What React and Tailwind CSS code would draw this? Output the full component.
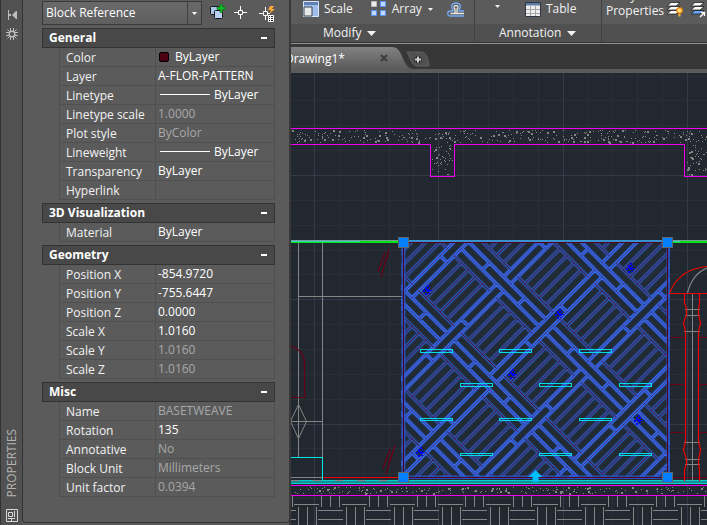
import React, { useState } from "react";

const sections = [
  {
    title: "General",
    rows: [
      { label: "Color", value: "ByLayer", swatch: true },
      { label: "Layer", value: "A-FLOR-PATTERN" },
      { label: "Linetype", value: "ByLayer", line: true },
      { label: "Linetype scale", value: "1.0000", muted: true },
      { label: "Plot style", value: "ByColor", muted: true },
      { label: "Lineweight", value: "ByLayer", line: true },
      { label: "Transparency", value: "ByLayer" },
      { label: "Hyperlink", value: "" },
    ],
  },
  { title: "3D Visualization", rows: [{ label: "Material", value: "ByLayer" }] },
  {
    title: "Geometry",
    rows: [
      { label: "Position X", value: "-854.9720" },
      { label: "Position Y", value: "-755.6447" },
      { label: "Position Z", value: "0.0000" },
      { label: "Scale X", value: "1.0160" },
      { label: "Scale Y", value: "1.0160", muted: true },
      { label: "Scale Z", value: "1.0160", muted: true },
    ],
  },
  {
    title: "Misc",
    rows: [
      { label: "Name", value: "BASETWEAVE", muted: true },
      { label: "Rotation", value: "135" },
      { label: "Annotative", value: "No", muted: true },
      { label: "Block Unit", value: "Millimeters", muted: true },
      { label: "Unit factor", value: "0.0394", muted: true },
    ],
  },
];

function Section({ title, rows }) {
  const [open, setOpen] = useState(true);
  return (
    <section className="mb-[3px]">
      <button
        type="button"
        aria-expanded={open}
        onClick={() => setOpen(!open)}
        className="flex h-5 w-full items-center justify-between border border-[#333333] bg-[#484848] pr-[7px] pl-1.5 text-left font-bold text-white"
      >
        {title}
        <span className="h-0.5 w-1.5 bg-white" />
      </button>
      {open && (
        <div className="pl-[17px]">
          <table className="w-full table-fixed border-separate border-spacing-0">
            <tbody>
              {rows.map((row) => (
                <tr key={row.label}>
                  <th scope="row" className="h-[19px] w-[97px] border-x border-b border-[#505050] p-0 pt-0.5 pl-1.5 text-left font-normal whitespace-nowrap text-[#f2f2f2]">
                    {row.label}
                  </th>
                  <td className={`h-[19px] border-r border-b border-[#505050] p-0 pl-0.5 whitespace-nowrap ${row.muted ? "text-[#a8a8a8]" : "text-white"}`}>
                    <div className="flex h-[18px] items-center pb-px">
                      {row.swatch && <span className="mr-1.5 ml-px size-2.5 rounded-xs border border-black bg-[#4c0013]" />}
                      {row.line && <span className="mr-1 ml-0.5 h-px w-[50px] bg-white" />}
                      {row.value}
                    </div>
                  </td>
                </tr>
              ))}
            </tbody>
          </table>
        </div>
      )}
    </section>
  );
}

function SideBar() {
  return (
    <div className="flex w-[22px] shrink-0 flex-col items-center border-l border-[#333333] bg-[#515151] pt-2.5 pb-[3px]">
      <button type="button" aria-label="Auto-hide">
        <svg width="12" height="10" viewBox="0 0 12 10" fill="#bdbdbd">
          <path d="M2 0h1v10H2zM10 1h1v8h-1zM3 4h2v2H3zM6 5l4-4v8z" />
        </svg>
      </button>
      <button type="button" aria-label="Palette settings" className="mt-2">
        <svg width="12" height="12" viewBox="0 0 12 12" fill="none" stroke="#bdbdbd">
          <circle cx="6" cy="6" r="2.800" strokeWidth="1.400" />
          <path d="M4.500 0v3M7.500 0v3M4.500 9v3M7.500 9v3M0 4.500h3M0 7.500h3M9 4.500h3M9 7.500h3M1.500 1.500l2.500 2.500M10.500 1.500L8 4M1.500 10.500L4 8M10.500 10.500L8 8" />
        </svg>
      </button>
      <span className="mt-auto rotate-180 text-xs leading-3 text-[#b5b5b5] [writing-mode:vertical-rl]">PROPERTIES</span>
      <svg className="mt-3 shrink-0" width="12" height="13" viewBox="0 0 12 13" fill="none" stroke="#d8d8d8">
        <path d="M.5.5h11v12H.5zM2.500 3.500h4v4h-4zM8.500 2v6M2 9.500h7M5.500 9v3" />
      </svg>
    </div>
  );
}

function PropertiesPalette() {
  return (
    <aside className="flex w-[289px] shrink-0 bg-[#5b5b5b] text-xs leading-4">
      <SideBar />
      <div className="mb-0.5 flex flex-1 flex-col rounded-b border-x border-b border-[#333333] pr-3.5 pl-[19px]">
        <div className="flex h-7 items-start pt-px">
          <div className="relative h-6 w-40">
            <select
              aria-label="Selected object"
              className="h-6 w-full appearance-none border border-[#3a3a3a] bg-linear-to-b from-[#696969] to-[#5f5f5f] pl-[3px] text-white"
            >
              <option>Block Reference</option>
            </select>
            <span className="pointer-events-none absolute inset-y-px right-px flex w-3.5 items-center justify-center border-l border-[#404040]">
              <svg width="5" height="3" viewBox="0 0 5 3" fill="#fff"><path d="M0 0h5L2.500 3z" /></svg>
            </span>
          </div>
          <button type="button" aria-label="Toggle PICKADD" className="ml-2 pt-0.5">
            <svg width="16" height="17" viewBox="0 0 16 17">
              <rect x=".5" y="3.500" width="9" height="8" rx="1" fill="#a9c5ea" stroke="#17191c" />
              <rect x="4.500" y="7.500" width="8" height="8" rx="1" fill="#b8d2f3" stroke="#17191c" />
              <path d="M10 1h2.500v3h3v2.500h-3v3H10v-3H7V4h3z" fill="#10bc25" stroke="#075b10" strokeWidth=".5" />
            </svg>
          </button>
          <button type="button" aria-label="Select objects" className="ml-2 pt-[5px]">
            <svg width="13" height="13" viewBox="0 0 13 13" fill="none" stroke="#fff">
              <path d="M6.500 0v4M6.500 9v4M0 6.500h4M9 6.500h4M4.500 4.500h4v4h-4z" />
            </svg>
          </button>
          <button type="button" aria-label="Quick select" className="ml-3 pt-1">
            <svg width="16" height="18" viewBox="0 0 16 18" fill="none" stroke="#fff">
              <path d="M6.500 2v4M6.500 11v4M0 8.500h4M9 8.500h2M4.500 6.500h4v4h-4z" />
              <path d="M11 1h4l-2 3h3l-6 5 2-4h-3z" fill="#ffaa38" stroke="none" />
              <path d="M9.500 10.500h5v6h-5z" fill="#fff" />
              <path d="M10 11.500h1M12 11.500h2M10 13.500h1M12 13.500h2M10 15.500h1M12 15.500h2" stroke="#222" />
            </svg>
          </button>
        </div>
        {sections.map((s) => (
          <Section key={s.title} {...s} />
        ))}
      </div>
      <div className="w-px bg-[#5b5b5b]" />
    </aside>
  );
}

function Caret() {
  return (
    <svg width="9" height="5" viewBox="0 0 9 5" fill="#f2f2f2"><path d="M0 0h9L4.500 5z" /></svg>
  );
}

function SmallCaret() {
  return (
    <svg width="5" height="3" viewBox="0 0 5 3" fill="#f2f2f2"><path d="M0 0h5L2.500 3z" /></svg>
  );
}

function LayersIcon({ children, bottom = "#fff" }) {
  return (
    <svg className="shrink-0" width="16" height="17" viewBox="0 0 16 17" stroke="#222" strokeWidth=".8">
      <path d="M4 9.500h9l-4 3.500H0z" fill={bottom} />
      <path d="M4 5.500h9L9 9H0z" fill="#fff" />
      <path d="M4 1.500h9L9 5H0z" fill="#fff" />
      {children}
    </svg>
  );
}

function Ribbon() {
  return (
    <div className="flex h-[42px] shrink-0 text-xs leading-4 text-[#f2f2f2]">
      <div className="flex w-[184px] shrink-0 flex-col border-r border-[#414141]">
        <div className="flex h-6 items-start pl-3">
          <button type="button" className="flex items-center gap-[5px]">
            <svg width="16" height="17" viewBox="0 0 16 17">
              <path d="M.5 1.500h15v15H.5z" fill="#9fbdea" stroke="#d6e4fa" />
              <path d="M1 2h14v3H1z" fill="#5f80b0" />
              <path d="M1 7h8v9H1z" fill="#e8e8e8" stroke="#3d4653" />
            </svg>
            <span className="pt-px">Scale</span>
          </button>
          <button type="button" className="ml-[18px] flex items-center gap-[5px]">
            <svg width="16" height="17" viewBox="0 0 16 17">
              <path d="M.5 1.500h5v5h-5z" fill="#eee" stroke="#bbb" />
              <path d="M9.500 1.500h5v5h-5zM.5 10.500h5v5h-5zM9.500 10.500h5v5h-5z" fill="#bfd7ff" stroke="#5c94f2" />
            </svg>
            <span className="pt-px">Array</span>
          </button>
          <button type="button" aria-label="Array options" className="ml-1.5 pt-2"><SmallCaret /></button>
          <button type="button" aria-label="Offset" className="ml-3.5 pt-0.5">
            <svg width="17" height="15" viewBox="0 0 17 15" fill="none" strokeWidth="1.300">
              <path d="M17 14H3c-3 0-3-5 0-5h3V8C3 5 5 1 9 1s6 4 3 7v1h5" stroke="#73a8f5" />
              <path d="M17 11.500H3.500M8 11V7C6 6 7 3.500 9 3.500S12 6 10 7v4" stroke="#e8e8e8" />
            </svg>
          </button>
        </div>
        <button type="button" className="flex h-[18px] items-center gap-1.5 bg-[#505050] pl-8">
          Modify <Caret />
        </button>
      </div>
      <div className="flex w-[127px] shrink-0 flex-col border-r border-[#414141]">
        <div className="flex h-6 items-start pl-5">
          <button type="button" aria-label="Text options" className="w-[30px] pt-[5px]"><SmallCaret /></button>
          <button type="button" className="flex items-center gap-[5px]">
            <svg width="16" height="16" viewBox="0 0 16 16">
              <path d="M.5 1.500h15v14H.5z" fill="#ededed" stroke="#2f3742" />
              <path d="M1 2h14v2.500H1z" fill="#5c7ca6" />
              <path d="M1 8.500h14M1 12.500h14M5.500 5v10M10.500 5v10" stroke="#a5a5a5" />
            </svg>
            <span className="pt-px">Table</span>
          </button>
        </div>
        <button type="button" className="flex h-[18px] items-center gap-1.5 bg-[#505050] pl-6">
          Annotation <Caret />
        </button>
      </div>
      <div className="flex min-w-0 flex-1 flex-col overflow-hidden">
        <div className="flex h-6 items-start gap-2 pl-1">
          <button type="button" className="-mt-3 w-[53px] shrink-0 text-center leading-[15px]">
            Layer Properties
          </button>
          <button type="button" aria-label="Layer off" className="pt-px">
            <LayersIcon>
              <circle cx="12.500" cy="9.500" r="2.600" fill="#ffe28a" stroke="#ff8b00" strokeWidth="1.300" />
              <path d="M12.500 13v2.500" stroke="#ffb640" strokeWidth="2" />
            </LayersIcon>
          </button>
          <button type="button" aria-label="Match layer" className="pt-px">
            <LayersIcon bottom="#6ba7ff">
              <path d="M9 16l4-4M10 11.500h3.500V15" fill="none" stroke="#fff" strokeWidth="1.300" />
            </LayersIcon>
          </button>
        </div>
        <div className="h-[18px] bg-[#505050]" />
      </div>
    </div>
  );
}

function FileTabs() {
  return (
    <div className="flex h-[25px] shrink-0 items-end overflow-hidden bg-[#373737] text-xs leading-4">
      <div className="flex h-[22px] w-[101px] shrink-0 items-center justify-between bg-linear-to-b from-[#828282] to-[#5b5b5b]">
        <a href="#drawing1" className="-ml-1.5 pt-0.5 text-white">Drawing1*</a>
        <button type="button" aria-label="Close Drawing1" className="mr-1">
          <svg width="8" height="8" viewBox="0 0 8 8" stroke="#3c3c3c" strokeWidth="2"><path d="M1 1l6 6M7 1L1 7" /></svg>
        </button>
      </div>
      <svg className="shrink-0" width="24" height="22" viewBox="0 0 24 22">
        <defs>
          <linearGradient id="tabEdge" x1="0" y1="0" x2="0" y2="1">
            <stop offset="0" stopColor="#828282" />
            <stop offset="1" stopColor="#5b5b5b" />
          </linearGradient>
        </defs>
        <path d="M0 0c12 0 9 20 21 22H0z" fill="url(#tabEdge)" />
      </svg>
      <button type="button" aria-label="New drawing" className="-ml-2.5 mb-0.5 shrink-0">
        <svg width="24" height="16" viewBox="0 0 24 16">
          <path d="M1 1h14c5 0 7 5 8 14H11C5 14 4 6 1 1z" fill="#505050" stroke="#606060" />
          <path d="M12 5v7M8.500 8.500h7" stroke="#242424" strokeWidth="4" />
          <path d="M12 5.500v6M9 8.500h6" stroke="#d0d0d0" strokeWidth="2" />
        </svg>
      </button>
    </div>
  );
}

// Weave lattice: u runs along the "\" diagonal, v along "/", one unit per plank width.
const UNIT = 14.08;
const point = (i, j) => {
  const u = 710 + UNIT * i;
  const v = 184.5 + UNIT * j;
  return `${((u + v) / 2).toFixed(1)} ${((u - v) / 2).toFixed(1)}`;
};
const seg = (i1, j1, i2, j2) => `M${point(i1, j1)}L${point(i2, j2)}`;

function buildWeave() {
  let fill = "";
  let edge = "";
  for (let a = -3; a < 7; a++) {
    for (let b = -4; b < 5; b++) {
      const i = a * 6;
      const j = b * 8;
      for (let k = 1; k < 5; k++) fill += seg(i + k, j - 4, i + k, j + 1);
      fill += seg(i, j - 4, i + 5, j - 4) + seg(i, j + 1, i + 5, j + 1);
      edge += seg(i, j - 5, i, j + 2) + seg(i + 5, j - 5, i + 5, j + 2);
      edge += seg(i, j + 2, i + 5, j + 2) + seg(i, j + 3, i + 5, j + 3);
      // the strips swap which one passes over at every other crossing
      const over = Math.abs(a + b) % 2 === 1;
      if (over) {
        edge += seg(i + 5, j + 2, i + 5, j + 3) + seg(i + 6, j + 2, i + 6, j + 3);
        edge += seg(i + 5, j, i + 6, j) + seg(i + 5, j + 5, i + 6, j + 5);
      } else {
        edge += seg(i + 5, j + 2, i + 6, j + 2) + seg(i + 5, j + 3, i + 6, j + 3);
        edge += seg(i + 3, j + 2, i + 3, j + 3) + seg(i + 8, j + 2, i + 8, j + 3);
      }
    }
  }
  return { fill, edge };
}

const weave = buildWeave();

function speckle(x, y, w, h, count, seed) {
  let s = seed;
  const next = () => {
    s = (s * 16807) % 2147483647;
    return s / 2147483647;
  };
  let d = "";
  for (let n = 0; n < count; n++) {
    const px = Math.floor(x + next() * w);
    const py = Math.floor(y + next() * h);
    d += `M${px} ${py}h1v1h-1z`;
    if (next() > 0.84) d += `M${px + 1} ${py}h1v2h-2v-1h1z`;
  }
  return d;
}

const concrete =
  speckle(292, 130, 415, 13, 330, 4217) +
  speckle(432, 145, 21, 30, 42, 911) +
  speckle(687, 145, 20, 30, 42, 5381) +
  speckle(292, 487, 415, 7, 190, 7741);

let grid = "";
let gridMajor = "";
for (let n = -1; n < 17; n++) {
  const d = `M${Math.round(314 + n * 24.85)}.5 73V525`;
  if (n % 5 === 0) gridMajor += d;
  else grid += d;
}
for (let n = -4; n < 15; n++) {
  const d = `M291 ${Math.round(175 + n * 24.85)}.5H707`;
  if (n % 5 === 0) gridMajor += d;
  else grid += d;
}

let earth = "";
for (let n = -3; n < 7; n++) {
  const x = Math.round(390 + n * 47.8);
  earth += `M${x} 504.5h25M${x + 27}.5 496v11M${x + 36}.5 496v11M${x + 45}.5 496v11`;
  earth += `M${x + 4}.5 507v18M${x + 13}.5 507v18M${x + 22}.5 507v18M${x + 24} 510.5h25M${x + 24} 519.5h25`;
}

const slots = [
  [420, 349], [499, 349], [579, 349],
  [460, 383], [539, 383], [619, 383],
  [420, 418], [499, 418], [579, 418],
  [460, 453], [539, 453], [619, 453],
];
const knots = [[427, 290], [630, 268], [559, 314], [512, 374], [420, 452], [638, 420]];
const grips = [[398, 237], [662, 237], [398, 472], [662, 472]];

function DrawingCanvas() {
  return (
    <svg className="block h-full w-full" viewBox="291 73 416 452" preserveAspectRatio="xMinYMin slice" fill="none" role="img" aria-label="Drawing1">
      <defs>
        <clipPath id="panel"><path d="M401 240h269v239H401z" /></clipPath>
      </defs>
      <path d="M291 73h416v452H291z" fill="#222830" />
      <g shapeRendering="crispEdges">
        <path d={grid} stroke="#292e38" />
        <path d={gridMajor} stroke="#343a49" />
        <path d={concrete} fill="#858585" />
        <path d="M291 128.500H707M291 144.500H430.500V176.500H454.500V144.500H684.500V176.500H707" stroke="#f000f0" />
        <path d={earth} stroke="#858585" />
        <path d="M298.500 243V457M322.500 243V481M298 296.500H402M291 421.500H322M291 477.500H322" stroke="#858585" />
        <path d="M669 337.500H684M699 337.500H707M669 384.500H684M699 384.500H707M669 432.500H684M699 432.500H707M669 477.500H707" stroke="#650016" />
      </g>
      <path d="M298.500 404.500l8 17-8 17-8-17z" stroke="#858585" />
      <path d="M291 346c8 3 13.500 9 13.500 17v34.500H291M378 272l7-20M381 277l8-28M384 265l4-10M383 469l7-20M386 474l9-29M389 462l4-11" stroke="#650016" strokeWidth="1.200" />

      <g clipPath="url(#panel)">
        <path d="M402 241h266v237H402z" fill="#222a34" />
        <path d={weave.fill} stroke="#24519f" strokeWidth="5" opacity=".4" />
        <path d={weave.fill} stroke="#2b5ab8" strokeWidth="3" opacity=".9" />
        <path d={weave.edge} stroke="#2259d0" strokeWidth="5" opacity=".4" />
        <path d={weave.edge} stroke="#346cf0" strokeWidth="3.200" />
        <path d={weave.fill} stroke="#52001c" opacity=".85" />
        <path d={weave.edge} stroke="#52001c" opacity=".6" strokeWidth=".9" />
        <path d="M403.500 241V478M668.500 241V478M402 477.500H669" stroke="#2558ce" strokeWidth="4" opacity=".8" />
        <path d="M403.500 241V478M667.500 241V478M402 477.500H669" stroke="#52001c" />
      </g>
      <g shapeRendering="crispEdges">
        <path d="M291 240.500H402M668 240.500H707" stroke="#7b9a9a" />
        <path d="M291 242H402M668 242H707" stroke="#00e612" strokeWidth="2" />
        <path d="M291 241.500H360M668 241.500H680" stroke="#30dac0" />
        <path d="M402 241H668" stroke="#3792d0" strokeWidth="2" />
        <path d="M402 242.500H668" stroke="#52001c" />
        {slots.map(([x, y]) => (
          <rect key={`${x}-${y}`} x={x + 0.5} y={y + 0.5} width="32" height={y < 400 ? 3 : 2} stroke="#00dbea" />
        ))}
        {knots.map(([x, y]) => (
          <path
            key={`${x}-${y}`}
            transform={`translate(${x} ${y})`}
            d="M-4 0h2v2h-2zM-2-3h2v3h-2zM0-5h2v2H0zM-1-1h3v1h1v2H0V1h-1zM2-3h1v2H2zM3 0h2v1H3zM-2 3h2v2h-2zM1 3h2v1H1z"
            fill="#0000fa"
          />
        ))}
        <path d="M322 477.500H402" stroke="#f00000" />
        <path d="M291 457.500H322.500V480" stroke="#00e5e5" />
        <path d="M291 481.500H707" stroke="#168d91" strokeWidth="3" />
        <path d="M291 480.500H707M291 483.500H707" stroke="#00d0d0" />
        <path d="M291 480.500H400" stroke="#858585" strokeDasharray="8 14" />
        <path d="M291 485.500H707M291 495.500H707" stroke="#f000f0" />
        <path d="M692.500 294V481M685 309.500h15M685 315.500h15M684 331.500h16M684 442.500h16M685 459.500h15M685 464.500h15" stroke="#858585" />
      </g>
      <path d="M669 293.500H707M670 292c7-17 20-24 37-25.500" stroke="#f00000" strokeWidth="1.200" />
      <path d="M687.500 293c3-13 10-21 19.500-25" stroke="#858585" strokeWidth="1.200" />
      <path d="M684.500 294v9l2 6v6l-3 8 2 8V442l-2 8 3 9v5l-2 6v11M699.500 294v9l-1 6v6l2 8-2 8V442l2 8-2 9v5l1 6v11" stroke="#f00000" strokeWidth="1.200" />

      {grips.map(([x, y]) => (
        <rect key={`${x}-${y}`} x={x + 0.5} y={y + 0.5} width="10" height="10" fill="#007fff" stroke="#5b6670" />
      ))}
      <path d="M535.500 470l7 7h-4v5h-6v-5h-4z" fill="#00bfff" />
    </svg>
  );
}

export default function App() {
  return (
    <div className="flex h-screen min-h-[525px] overflow-hidden bg-[#5b5b5b] font-['Open_Sans','Noto_Sans',sans-serif]">
      <PropertiesPalette />
      <main className="flex min-w-0 flex-1 flex-col border-l-2 border-[#383838]">
        <Ribbon />
        <div className="h-0.5 shrink-0 border-t border-b border-t-[#333333] border-b-[#929292]" />
        <FileTabs />
        <div className="h-1 shrink-0 bg-[#5b5b5b]" />
        <div className="min-h-0 flex-1">
          <DrawingCanvas />
        </div>
      </main>
    </div>
  );
}
